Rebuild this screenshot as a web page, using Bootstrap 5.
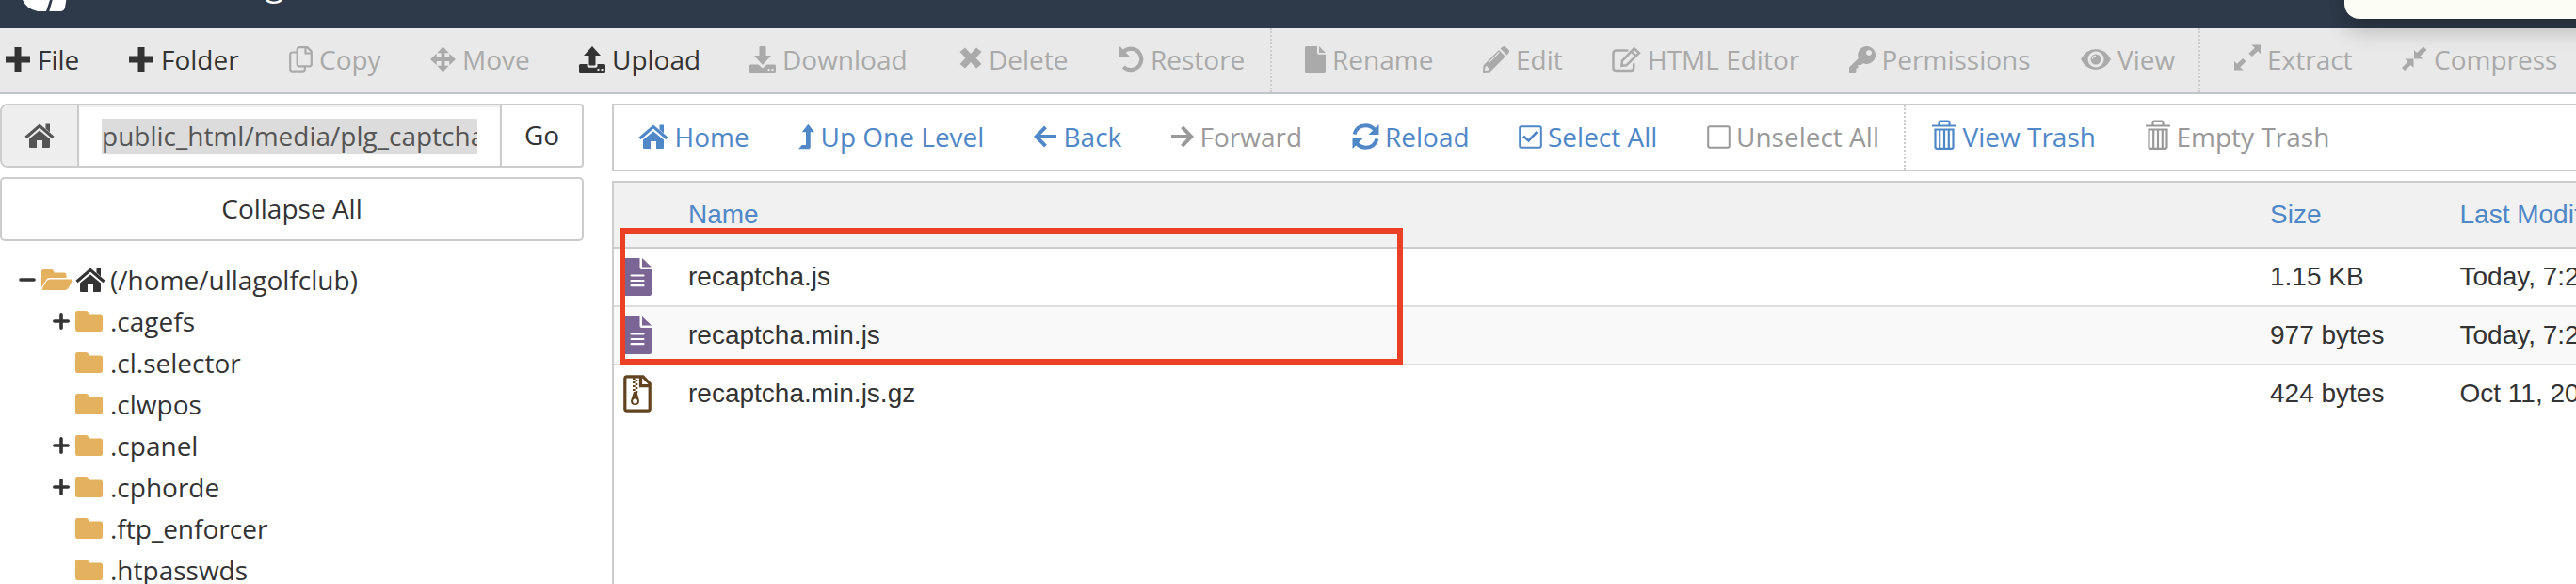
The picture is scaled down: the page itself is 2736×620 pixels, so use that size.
<!DOCTYPE html>
<html lang="en">
<head>
    <meta charset="UTF-8">
    <meta name="viewport" content="width=device-width, initial-scale=1.0">
    <title>File Manager</title>
    <link href="https://cdn.jsdelivr.net/npm/bootstrap@5.3.0/dist/css/bootstrap.min.css" rel="stylesheet">
    <style>
        body {
            height: 620px;
            overflow: hidden;
            background: #fff;
            color: #333;
            font-family: "Open Sans", sans-serif;
            font-size: 28px;
            line-height: 40px;
        }
        svg {
            flex: none;
            fill: currentColor;
        }
        .top-header {
            height: 30px;
            background: #2e3a4a;
            color: #fff;
        }
        .top-logo { margin-left: 24px; }
        .top-title {
            font-size: 36px;
            line-height: 40px;
            margin: -38px 0 0 50px;
        }
        .action-bar, .nav-bar { display: grid; }
        .action-bar {
            height: 70px;
            grid-template-columns: 131px 170px 150px 158px 181px 223px 169px 161px 37px 189px 137px 251.5px 246.5px 125px 38px 178px 1fr;
            background: #e9e9e9;
            border-bottom: 2px solid #bfc5cb;
            padding-left: 6px;
        }
        .nav-bar {
            height: 72px;
            grid-template-columns: 170px 250px 145px 192.5px 177px 200px 209.5px 30px 227px 1fr;
            border: 2px solid #ccc;
            border-right: 0;
            padding-left: 26px;
        }
        .tool {
            display: flex;
            align-items: center;
            gap: 7px;
            padding-bottom: 2px;
            color: #333;
            text-decoration: none;
            white-space: nowrap;
        }
        .tool.off { color: #aaa; }
        .nav-bar .tool { color: #4f87c7; gap: 6.5px; }
        .nav-bar .tool.off { color: #999; }
        .tool-divider { border-left: 2px dotted #ccc; }
        .trash-icon { margin-bottom: 5px; }
        .main-area { padding-top: 10px; }
        .side-panel {
            width: 620px;
            margin-right: 30px;
        }
        .path-group {
            height: 68px;
            border: 2px solid #ccc;
            border-radius: 8px 4px 4px 8px;
            overflow: hidden;
        }
        .path-home {
            width: 82px;
            background: #eee;
            border-right: 2px solid #ccc;
            color: #555;
        }
        .path-field {
            width: 447px;
            padding: 1px 24px 0;
            color: #555;
            box-shadow: inset 0 2px 2px rgba(0, 0, 0, .075);
        }
        .path-field span {
            display: block;
            width: 399px;
            overflow: hidden;
            background: #dcdcdc;
            line-height: 37px;
            white-space: nowrap;
        }
        .path-go {
            border-left: 2px solid #ccc;
            padding-bottom: 2px;
        }
        .collapse-all {
            height: 68px;
            margin-top: 10px;
            padding-bottom: 2px;
            border: 2px solid #ccc;
            border-radius: 5px;
        }
        .tree { margin: 19px 0 0; }
        .tree li {
            display: flex;
            align-items: center;
            height: 44px;
            padding-left: 56px;
        }
        .tree .tree-root { padding-left: 20px; }
        .folder {
            margin-right: 8px;
            color: #e4b15e;
        }
        .tree-root .folder { margin-right: 3px; }
        .root-home { margin-right: 5px; }
        .toggle {
            width: 18px;
            margin-right: 6px;
        }
        .file-list {
            height: 440px;
            margin-top: 10px;
            border: 2px solid #ccc;
            border-width: 2px 0 0 2px;
            overflow: hidden;
            font-family: "Liberation Sans", sans-serif;
        }
        .file-row {
            display: grid;
            grid-template-columns: 79px 1680px 201.5px 1fr;
            align-items: center;
            height: 62px;
            border-bottom: 2px solid #ddd;
            white-space: nowrap;
        }
        .file-row span { min-width: 0; }
        .file-row:nth-child(3) { background: #f9f9f9; }
        .file-row:last-child { border-bottom-color: transparent; }
        .file-head {
            height: 70px;
            background: #f1f1f1;
            border-bottom-color: #ccc;
            color: #4f87c7;
        }
        .file-row svg { margin-left: 10px; }
        .js-icon { color: #7a6594; }
        .gz-icon { color: #62431f; }
        .marker {
            position: absolute;
            left: 658px;
            top: 242px;
            width: 832px;
            height: 145px;
            border: 6px solid #ec4026;
        }
        .notice {
            position: absolute;
            right: 0;
            top: 0;
            width: 261px;
            height: 75px;
            overflow: hidden;
        }
        .notice div {
            width: 300px;
            height: 60px;
            margin: -40px 0 0 15px;
            border-radius: 16px;
            background: #fcfdf5;
            box-shadow: 0 12px 24px rgba(0, 0, 0, .22);
        }
    </style>
</head>
<body class="position-relative">
    <!-- shared icons -->
    <svg class="d-none">
        <symbol id="home" viewBox="0 0 32 26"><path d="M16 7.500 27 16.500V25q0 1-1 1h-7v-8h-6v8H6q-1 0-1-1v-8.500z"/><path d="M1.500 15 16 2.500 30.500 15" fill="none" stroke="currentColor" stroke-width="3.200"/><path d="M22.500 .5H27v9l-4.500-4z"/></symbol>
        <symbol id="plus" viewBox="0 0 26 26"><path d="M9.500 0h7v9.500H26v7h-9.500V26h-7v-9.500H0v-7h9.500z"/></symbol>
        <symbol id="folder" viewBox="0 0 29 22"><path d="M2.500 0h8.500q3 0 3.500 3.500h12q2.500 0 2.500 2.500v13.500q0 2.500-2.500 2.500h-24Q0 22 0 19.500v-17Q0 0 2.500 0z"/></symbol>
        <symbol id="small-plus" viewBox="0 0 18 18"><path d="M9 1.800v14.400M1.800 9h14.400" stroke="currentColor" stroke-width="3.600" stroke-linecap="round"/></symbol>
        <symbol id="trash" viewBox="0 0 26 32"><path d="M0 6.500h26M7.500 6V3q0-1.500 1.500-1.500h8q1.500 0 1.500 1.500v3M3.500 10.500h19V29q0 1.800-2 1.800h-15q-2 0-2-1.800zM8.200 11v19M13 11v19M17.800 11v19" fill="none" stroke="currentColor" stroke-width="2.200"/></symbol>
        <symbol id="script" viewBox="0 0 30 40"><path d="M2 0h15.500v10q0 2 2 2H30v26q0 2-2 2H2q-2 0-2-2V2q0-2 2-2z"/><path d="M20 0 30 9.500H20z"/><path d="M8.500 18.500h13M8.500 24h13M8.500 29.200h13" stroke="#fff" stroke-width="2.200" stroke-linecap="round"/></symbol>
    </svg>

    <header class="top-header d-flex align-items-start overflow-hidden">
        <svg class="top-logo" width="47" height="12" viewBox="0 0 47 12"><path d="M0 0H29L25 12H16Q4 9.500 0 0zM31.700 0H46.300L45 8Q44 12 40 12H28.300z"/></svg>
        <div class="top-title">File Manager</div>
    </header>

    <nav class="action-bar">
        <a class="tool" href="#"><svg width="27" height="26" viewBox="0 0 27 26"><use href="#plus" width="26" height="26"/></svg>File</a>
        <a class="tool" href="#"><svg width="27" height="26" viewBox="0 0 27 26"><use href="#plus" width="26" height="26"/></svg>Folder</a>
        <a class="tool off" href="#"><svg width="25" height="28" viewBox="0 0 25 28"><path d="M11 1.200h8.500l4.300 4.500V19q0 2.300-2.300 2.300H11Q8.700 21.300 8.700 19V3.500Q8.700 1.200 11 1.200zM17.500 1.500V7.500h6M8 6.500H3.500Q1.200 6.500 1.200 9v15.300q0 2.300 2.300 2.300h11q2.300 0 2.300-2.300V22" fill="none" stroke="currentColor" stroke-width="2.200"/></svg>Copy</a>
        <a class="tool off" href="#"><svg width="27" height="28" viewBox="0 0 28 28"><path d="m14 0 6.500 7H16v5h5V7.500l7 6.500-7 6.500V16h-5v5h4.500L14 28l-6.500-7H12v-5H7v4.500L0 14l7-6.500V12h5V7H7.500z"/></svg>Move</a>
        <a class="tool" href="#"><svg width="28" height="28" viewBox="0 0 28 28"><path d="m14 0 9 10h-5.500v9.500q0 1-1 1h-5q-1 0-1-1V10H5z"/><path fill-rule="evenodd" d="M1.500 19H8.500v2q0 1.800 1.800 1.800h7.400q1.800 0 1.800-1.800v-2h7q1.500 0 1.500 1.500v6q0 1.500-1.500 1.500h-25Q0 28 0 26.500v-6Q0 19 1.500 19zM19.500 24v2h2v-2zM23.500 24v2h2v-2z"/></svg>Upload</a>
        <a class="tool off" href="#"><svg width="28" height="28" viewBox="0 0 28 28"><path d="M11.500 0h5q1 0 1 1v9H23l-9 10-9-10h5.500V1q0-1 1-1z"/><path fill-rule="evenodd" d="M1.500 19.500H9.500l4.500 4 4.500-4h8q1.500 0 1.500 1.500v5.500q0 1.500-1.500 1.500h-25Q0 28 0 26.500V21q0-1.500 1.500-1.500zM19.500 24v2h2v-2zM23.500 24v2h2v-2z"/></svg>Download</a>
        <a class="tool off" href="#"><svg width="24" height="28" viewBox="0 0 24 28"><path d="m6 1.500 6 6.500 6-6.500L23.500 6l-6 6.500 6 6.500L18 23.500 12 17l-6 6.500L.5 19l6-6.500L.5 6z"/></svg>Delete</a>
        <a class="tool off" href="#"><svg width="27" height="28" viewBox="0 0 28 28"><path d="M5 6Q9 2.300 14 2.300a11.600 11.600 0 1 1-8.500 20" fill="none" stroke="currentColor" stroke-width="4.400"/><path d="M0 0H2L12 10.500V12H1.500Q0 12 0 10.500z"/></svg>Restore</a>
        <span class="tool-divider"></span>
        <a class="tool off" href="#"><svg width="22" height="28" viewBox="0 0 22 28"><path d="M1.500 0H13v7q0 1.800 1.800 1.800H22v17.700q0 1.500-1.500 1.500h-19Q0 28 0 26.500v-25Q0 0 1.500 0zM15 0l7 7h-7z"/></svg>Rename</a>
        <a class="tool off" href="#"><svg width="28" height="28" viewBox="0 0 28 28"><path fill-rule="evenodd" d="m17 4 7 7L7.500 27.500 0 28l.5-7.500zM2.500 21.500 2 26l4.500-.5V23H5v-1.500zM17 6 6 17l.8.8 11-11zM18.500 2.500 21 .5q1.500-1 3 0l3.500 3.500q1 1.500 0 3l-2 2.500z"/></svg>Edit</a>
        <a class="tool off" href="#"><svg width="31" height="28" viewBox="0 0 32 28"><path d="M18 4.200H5q-3.500 0-3.500 3.500V23q0 3.500 3.500 3.500h15.500q3.500 0 3.500-3.500v-4.500" fill="none" stroke="currentColor" stroke-width="2.600"/><path d="m24.500 2 5.300 5L16 20.500l-5.200.5.500-5.300zM21.500 5.500l4.800 4.800" fill="none" stroke="currentColor" stroke-width="2.600"/></svg>HTML Editor</a>
        <a class="tool off" href="#"><svg width="28" height="28" viewBox="0 0 28 28"><path fill-rule="evenodd" d="M18.500 0A9.500 9.500 0 1 1 15 18.300L12.500 20H9.500v3.500H7.500V27L6.500 28H0v-5.500L9.800 13A9.500 9.500 0 0 1 18.500 0zM21 4a3 3 0 1 0 .1 0z"/></svg>Permissions</a>
        <a class="tool off" href="#"><svg width="32" height="22" viewBox="0 0 32 22"><path fill-rule="evenodd" d="M0 11Q6 0 16 0t16 11q-6 11-16 11T0 11zM16 2.500a8.500 8.500 0 1 0 .1 0z"/><circle cx="16" cy="11" r="5.500"/><path d="M12.500 10.500q0-3 3.500-3" fill="none" stroke="#e9e9e9" stroke-width="1.500"/></svg>View</a>
        <span class="tool-divider"></span>
        <a class="tool off" href="#"><svg class="mb-1" width="28" height="28" viewBox="0 0 29 28"><path d="M19 0h10v10l-3-3-6.500 6L16 9.500l6.500-6zM10 28H0V18l3 3 6.500-6 3.500 3.500-6.500 6z"/></svg>Extract</a>
        <a class="tool off" href="#"><svg width="27" height="28" viewBox="0 0 27 28"><path d="M13 13.500V4l3 3L23 .5 26.500 4 19.500 10.500l3 3zM12.500 13.500V23l-3-3L3 26 0 23l6.500-6.500-3-3z"/></svg>Compress</a>
    </nav>

    <main class="main-area d-flex">
        <aside class="side-panel flex-shrink-0">
            <div class="path-group d-flex">
                <span class="path-home d-flex align-items-center justify-content-center"><svg width="32" height="26"><use href="#home"/></svg></span>
                <div class="path-field d-flex align-items-center"><span>public_html/media/plg_captcha</span></div>
                <div class="path-go flex-fill d-flex align-items-center justify-content-center">Go</div>
            </div>
            <div class="collapse-all d-flex align-items-center justify-content-center">Collapse All</div>
            <ul class="tree list-unstyled">
                <li class="tree-root"><svg class="toggle" width="18" height="4"><path d="M2 2h14" stroke="currentColor" stroke-width="3.600" stroke-linecap="round"/></svg><svg class="folder" width="33" height="22" viewBox="0 0 33 22"><path d="M2 0h8.500q2.500 0 3 3.500H24q2.500 0 2.500 2.500v3H9Q6 9 4.500 12L0 19V2Q0 0 2 0zM9.500 10.500h22q2 0 1 2l-4 7.500Q27.500 22 25 22H2Q0 22 1 20l4.500-7.500q1-2 4-2z"/></svg><svg class="root-home" width="32" height="26"><use href="#home"/></svg><span>(/home/ullagolfclub)</span></li>
                <li><svg class="toggle" width="18" height="18"><use href="#small-plus"/></svg><svg class="folder" width="29" height="22"><use href="#folder"/></svg><span>.cagefs</span></li>
                <li><span class="toggle"></span><svg class="folder" width="29" height="22"><use href="#folder"/></svg><span>.cl.selector</span></li>
                <li><span class="toggle"></span><svg class="folder" width="29" height="22"><use href="#folder"/></svg><span>.clwpos</span></li>
                <li><svg class="toggle" width="18" height="18"><use href="#small-plus"/></svg><svg class="folder" width="29" height="22"><use href="#folder"/></svg><span>.cpanel</span></li>
                <li><svg class="toggle" width="18" height="18"><use href="#small-plus"/></svg><svg class="folder" width="29" height="22"><use href="#folder"/></svg><span>.cphorde</span></li>
                <li><span class="toggle"></span><svg class="folder" width="29" height="22"><use href="#folder"/></svg><span>.ftp_enforcer</span></li>
                <li><span class="toggle"></span><svg class="folder" width="29" height="22"><use href="#folder"/></svg><span>.htpasswds</span></li>
            </ul>
        </aside>

        <section class="flex-fill overflow-hidden">
            <nav class="nav-bar">
                <a class="tool" href="#"><svg width="32" height="26"><use href="#home"/></svg>Home</a>
                <a class="tool" href="#"><svg width="17" height="28" viewBox="0 0 18 28"><path d="m11 0 7 9h-4.500v17q0 2-2 2H0l4-4.500h4.500V9H4z"/></svg>Up One Level</a>
                <a class="tool" href="#"><svg width="25" height="24" viewBox="0 0 26 24"><path d="M13 1.500 2.800 12 13 22.500M3 12h22" fill="none" stroke="currentColor" stroke-width="4"/></svg>Back</a>
                <a class="tool off" href="#"><svg width="25" height="24" viewBox="0 0 26 24"><path d="M13 1.500 23.200 12 13 22.500M23 12H1" fill="none" stroke="currentColor" stroke-width="4"/></svg>Forward</a>
                <a class="tool" href="#"><svg width="29" height="28" viewBox="0 0 29 28"><path d="M2.500 11.500Q5 2.500 14.500 2.300 20 2.300 24.500 7M26.500 16.500Q24 25.500 14.500 25.700 9 25.700 4.500 21" fill="none" stroke="currentColor" stroke-width="4"/><path d="M28.500 1v11H17.500zM.5 27V16h11z"/></svg>Reload</a>
                <a class="tool" href="#"><svg width="25" height="25" viewBox="0 0 25 25"><path d="M3 1.200h19q1.800 0 1.800 1.800v19q0 1.800-1.800 1.800H3q-1.800 0-1.800-1.800V3Q1.200 1.200 3 1.200z" fill="none" stroke="currentColor" stroke-width="2"/><path d="m5 11.500 5.500 5 9-9.500" fill="none" stroke="currentColor" stroke-width="2.600"/></svg>Select All</a>
                <a class="tool off" href="#"><svg width="25" height="25" viewBox="0 0 25 25"><path d="M3 1.200h19q1.800 0 1.800 1.800v19q0 1.800-1.800 1.800H3q-1.800 0-1.800-1.800V3Q1.200 1.200 3 1.200z" fill="none" stroke="currentColor" stroke-width="2"/></svg>Unselect All</a>
                <span class="tool-divider"></span>
                <a class="tool" href="#"><svg class="trash-icon" width="26" height="32"><use href="#trash"/></svg>View Trash</a>
                <a class="tool off" href="#"><svg class="trash-icon" width="26" height="32"><use href="#trash"/></svg>Empty Trash</a>
            </nav>
            <div class="file-list">
                <div class="file-row file-head"><span></span><span>Name</span><span>Size</span><span>Last Modified</span></div>
                <div class="file-row"><svg class="js-icon" width="30" height="40"><use href="#script"/></svg><span>recaptcha.js</span><span>1.15 KB</span><span>Today, 7:25 PM</span></div>
                <div class="file-row"><svg class="js-icon" width="30" height="40"><use href="#script"/></svg><span>recaptcha.min.js</span><span>977 bytes</span><span>Today, 7:25 PM</span></div>
                <div class="file-row"><svg class="gz-icon" width="30" height="40" viewBox="0 0 30 40"><path d="M4 1.800h17l7.200 7.500V36q0 2.200-2.200 2.200H4q-2.200 0-2.200-2.200V4Q1.800 1.800 4 1.800zM18.500 2v9.700H28" fill="none" stroke="currentColor" stroke-width="3.200"/><path d="M11.300 3v16" stroke="currentColor" stroke-width="2.600" stroke-dasharray="2 2"/><path d="M14 5v14" stroke="currentColor" stroke-width="2.600" stroke-dasharray="2 2"/><path fill-rule="evenodd" d="M11 18h3.500l2.500 9.500q0 4.500-4.500 4.500T8 27.500zM12.500 25.500a2.500 2.500 0 1 0 .1 0z"/></svg><span>recaptcha.min.js.gz</span><span>424 bytes</span><span>Oct 11, 2022</span></div>
            </div>
        </section>
    </main>

    <div class="marker"></div>
    <div class="notice"><div></div></div>
    <script src="https://cdn.jsdelivr.net/npm/bootstrap@5.3.0/dist/js/bootstrap.bundle.min.js"></script>
</body>
</html>
